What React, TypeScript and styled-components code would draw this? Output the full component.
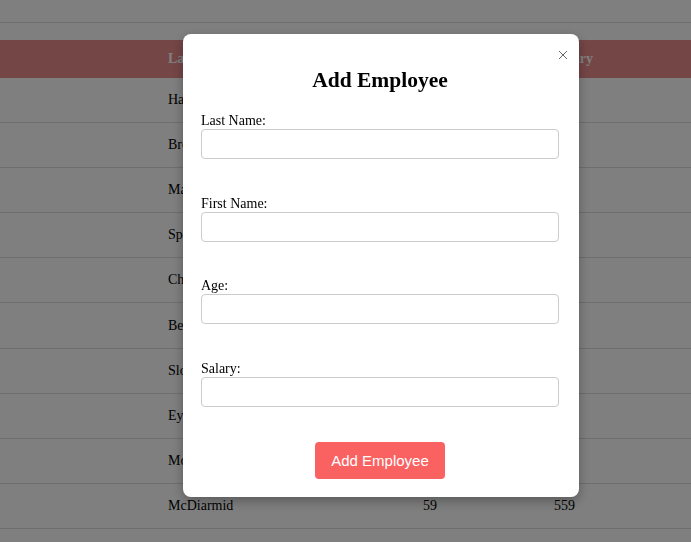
import styled, { createGlobalStyle } from "styled-components";

const GlobalStyle = createGlobalStyle`
  body {
    margin: 0;
    background: #ffffff;
    font-family: "Liberation Serif", "Times New Roman", serif;
    font-size: 14px;
    color: #000;
  }
`;

const Page = styled.div`
  min-height: 542px;
`;

const TopBar = styled.div`
  height: 22px;
  border-bottom: 1px solid #dcdcdc;
  margin-bottom: 17px;
`;

const Table = styled.div`
  display: flex;
  flex-direction: column;
`;

const Row = styled.div<{ $head?: boolean }>`
  display: grid;
  grid-template-columns: 160px 255px 131px 1fr;
  align-items: center;
  height: ${(p) => (p.$head ? "38px" : "45.1px")};
  box-sizing: border-box;
  background: ${(p) => (p.$head ? "#ea8c8c" : "transparent")};
  color: ${(p) => (p.$head ? "#ffffff" : "#000")};
  font-weight: ${(p) => (p.$head ? "bold" : "normal")};
  border-bottom: ${(p) => (p.$head ? "none" : "1px solid #dcdcdc")};
`;

const Cell = styled.div`
  padding: 0 8px;
`;

const Overlay = styled.div`
  position: fixed;
  inset: 0;
  background: rgba(0, 0, 0, 0.5);
`;

const Modal = styled.div`
  position: absolute;
  top: 34px;
  left: 183px;
  width: 396px;
  box-sizing: border-box;
  padding: 20px 20px 18px 18px;
  background: #ffffff;
  border-radius: 8px;
  box-shadow: 0 4px 12px rgba(0, 0, 0, 0.3);
  display: flex;
  flex-direction: column;
`;

const Close = styled.button`
  position: absolute;
  top: 15px;
  right: 10px;
  width: 12px;
  height: 12px;
  padding: 0;
  border: none;
  background: transparent;
  display: flex;
  align-items: center;
  justify-content: center;
`;

const Title = styled.h2`
  margin: 14px 0 19px;
  font-size: 21.5px;
  line-height: 25px;
  font-weight: bold;
  text-align: center;
`;

const Field = styled.div`
  display: flex;
  flex-direction: column;
  margin-bottom: 35.6px;

  &:last-of-type {
    margin-bottom: 35.5px;
  }
`;

const Label = styled.label`
  font-size: 14px;
  line-height: 17px;
`;

const Input = styled.input`
  width: 100%;
  height: 30px;
  box-sizing: border-box;
  border: 1px solid #cccccc;
  border-radius: 4px;
  padding: 0 8px;
  font-size: 14px;
`;

const SubmitButton = styled.button`
  align-self: center;
  height: 37px;
  padding: 0 16px;
  border: none;
  border-radius: 4px;
  background: #fa6262;
  color: #ffffff;
  font-family: "Liberation Sans", Arial, sans-serif;
  font-size: 15px;
`;

const employees = [
  { last: "Harris", age: 34, salary: 420 },
  { last: "Brown", age: 41, salary: 515 },
  { last: "Martin", age: 28, salary: 380 },
  { last: "Spencer", age: 52, salary: 610 },
  { last: "Chapman", age: 37, salary: 470 },
  { last: "Bell", age: 45, salary: 530 },
  { last: "Sloan", age: 30, salary: 400 },
  { last: "Eyre", age: 26, salary: 350 },
  { last: "Moore", age: 48, salary: 590 },
  { last: "McDiarmid", age: 59, salary: 559 },
];

const fields = ["Last Name:", "First Name:", "Age:", "Salary:"];

export default function App() {
  return (
    <Page>
      <GlobalStyle />
      <TopBar />
      <Table>
        <Row $head>
          <Cell />
          <Cell>Last Name</Cell>
          <Cell>Age</Cell>
          <Cell>Salary</Cell>
        </Row>
        {employees.map((e) => (
          <Row key={e.last}>
            <Cell />
            <Cell>{e.last}</Cell>
            <Cell>{e.age}</Cell>
            <Cell>{e.salary}</Cell>
          </Row>
        ))}
      </Table>
      <Overlay>
        <Modal>
          <Close aria-label="Close">
            <svg width="10" height="10" viewBox="0 0 10 10">
              <path d="M1 1 L9 9 M9 1 L1 9" stroke="#666" strokeWidth="1" fill="none" />
            </svg>
          </Close>
          <Title>Add Employee</Title>
          {fields.map((f) => (
            <Field key={f}>
              <Label>{f}</Label>
              <Input />
            </Field>
          ))}
          <SubmitButton>Add Employee</SubmitButton>
        </Modal>
      </Overlay>
    </Page>
  );
}
